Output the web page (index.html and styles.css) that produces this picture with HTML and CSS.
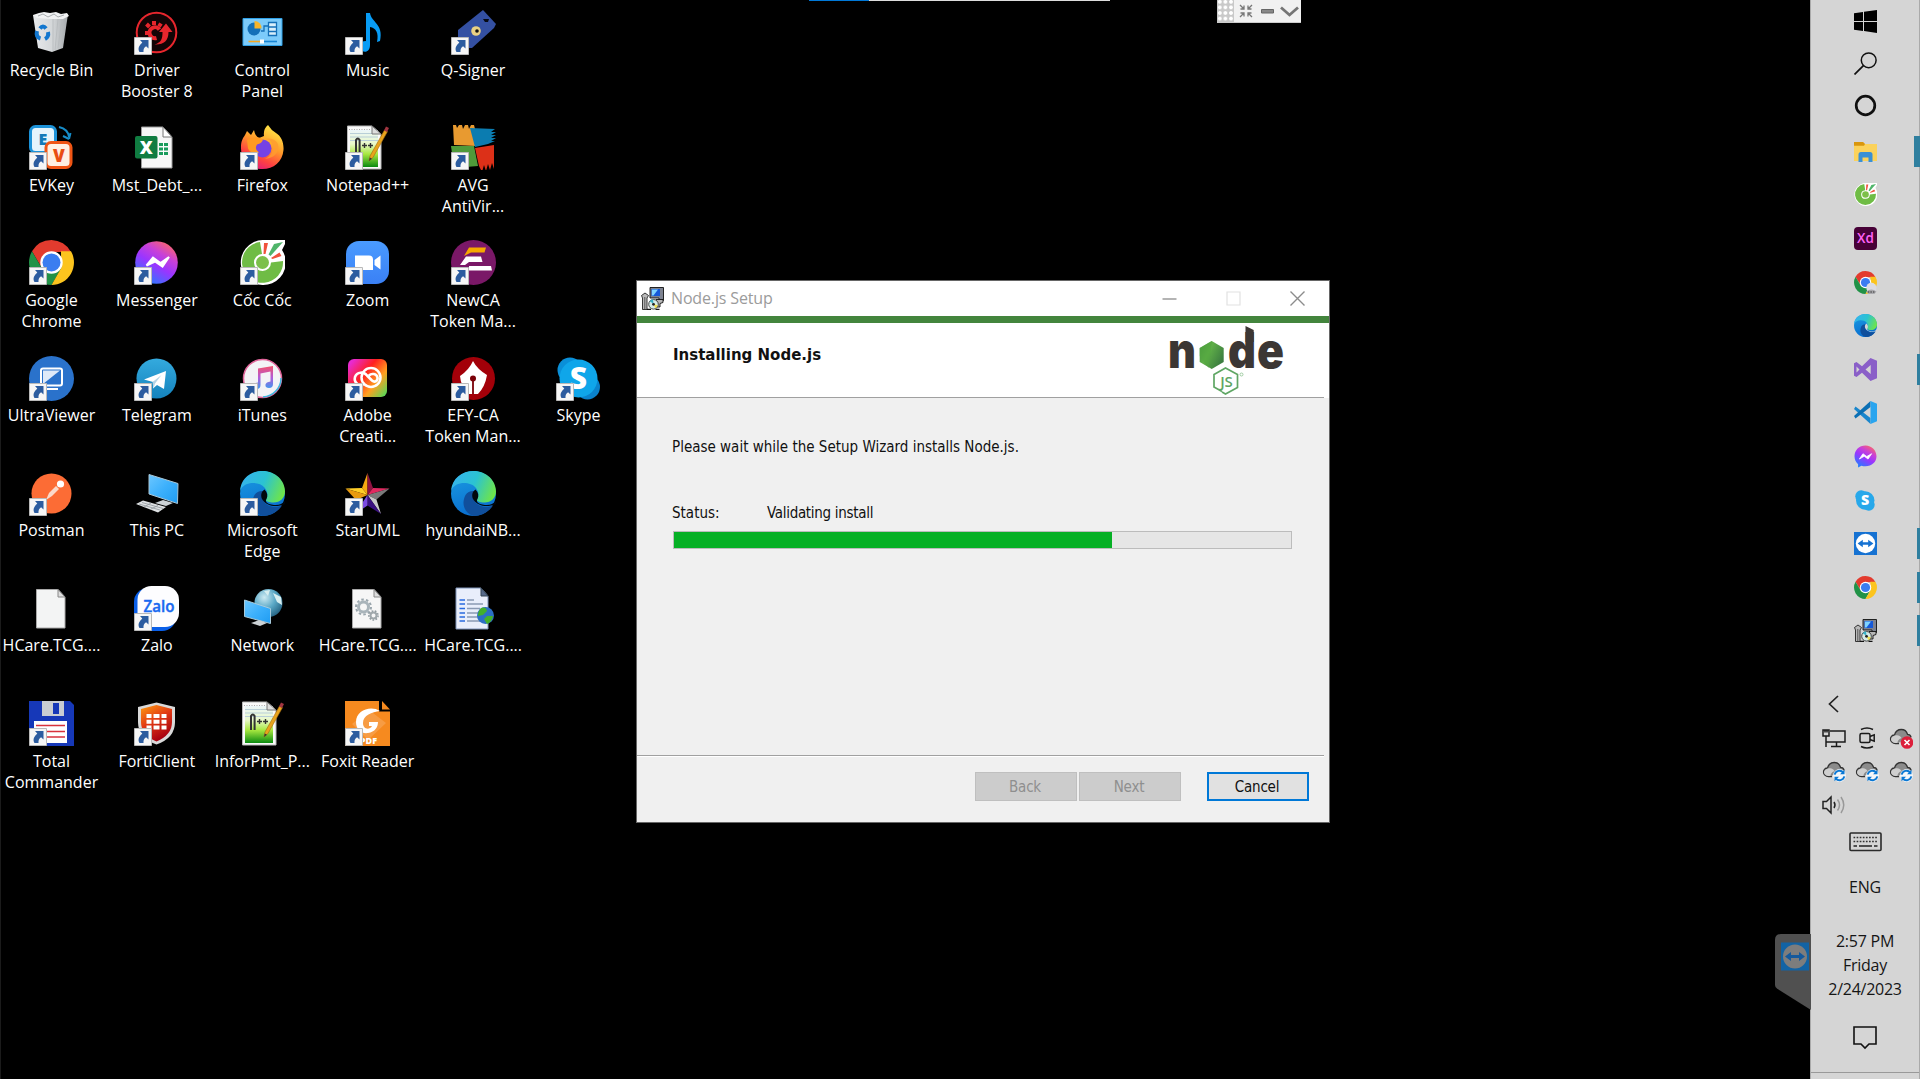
FILE: index.html
```html
<!DOCTYPE html>
<html lang="en">
<head>
<meta charset="utf-8">
<title>Node.js Setup</title>
<link rel="stylesheet" href="styles.css">
</head>
<body>
<svg class="defs" width="0" height="0" aria-hidden="true">
<defs>
<linearGradient id="gMsg" x1="0.2" y1="1" x2="0.8" y2="0"><stop offset="0" stop-color="#1a83ff"/><stop offset=".45" stop-color="#9a35ff"/><stop offset=".7" stop-color="#c840d8"/><stop offset="1" stop-color="#ff6a60"/></linearGradient>
<linearGradient id="gFox" x1="0.8" y1="0" x2="0.3" y2="1"><stop offset="0" stop-color="#fff04a"/><stop offset=".45" stop-color="#ff9a2a"/><stop offset=".75" stop-color="#ff4340"/><stop offset="1" stop-color="#e01880"/></linearGradient>
<linearGradient id="gEdge" x1="0" y1="0.3" x2="1" y2="0.6"><stop offset="0" stop-color="#36b3ee"/><stop offset=".5" stop-color="#2bc3d2"/><stop offset="1" stop-color="#6fe548"/></linearGradient>
<linearGradient id="gEdge2" x1="0" y1="0" x2="0.3" y2="1"><stop offset="0" stop-color="#1b9de2"/><stop offset="1" stop-color="#0a6fd0"/></linearGradient>
<linearGradient id="gBlue" x1="0" y1="0" x2="0" y2="1"><stop offset="0" stop-color="#4a9bff"/><stop offset="1" stop-color="#3a80f5"/></linearGradient>
<linearGradient id="gTg" x1="0" y1="0" x2="0" y2="1"><stop offset="0" stop-color="#34aade"/><stop offset="1" stop-color="#1583bd"/></linearGradient>
<linearGradient id="gNote" x1="0" y1="0" x2="0" y2="1"><stop offset="0" stop-color="#ecf6fa"/><stop offset=".38" stop-color="#e8f8c8"/><stop offset=".65" stop-color="#a8e840"/><stop offset="1" stop-color="#0a8a10"/></linearGradient>
<linearGradient id="gAdobe" x1="0" y1="0.2" x2="1" y2="1"><stop offset="0" stop-color="#e82ad0"/><stop offset=".35" stop-color="#ff2020"/><stop offset=".65" stop-color="#ffa020"/><stop offset="1" stop-color="#40e060"/></linearGradient>
<linearGradient id="gMonitor" x1="0" y1="0" x2="1" y2="1"><stop offset="0" stop-color="#6cc7ff"/><stop offset=".5" stop-color="#3cb0fc"/><stop offset="1" stop-color="#1f9cf2"/></linearGradient>
<linearGradient id="gForti" x1="0" y1="0" x2="0.5" y2="1"><stop offset="0" stop-color="#ff9d10"/><stop offset=".5" stop-color="#e23a14"/><stop offset="1" stop-color="#a80010"/></linearGradient>
<linearGradient id="gTunes" x1="0" y1="0" x2="0" y2="1"><stop offset="0" stop-color="#f2506c"/><stop offset=".5" stop-color="#b25bd8"/><stop offset="1" stop-color="#3a9cf0"/></linearGradient>
<linearGradient id="gBin" x1="0" y1="0" x2="1" y2="0"><stop offset="0" stop-color="#e8eaec"/><stop offset=".55" stop-color="#d4d7d9"/><stop offset="1" stop-color="#a5a9ac"/></linearGradient>
<linearGradient id="gNode" x1="0" y1="0" x2="1" y2="0.6"><stop offset="0" stop-color="#3f8b3d"/><stop offset=".45" stop-color="#5fae48"/><stop offset="1" stop-color="#3c7d40"/></linearGradient>
<radialGradient id="gGlobe" cx=".35" cy=".3" r=".8"><stop offset="0" stop-color="#cdeaf2"/><stop offset=".5" stop-color="#5aa8c6"/><stop offset="1" stop-color="#1e5a7a"/></radialGradient>

<symbol id="shortcut" viewBox="0 0 18 18"><path d="M.5.5h17v17H.5z" fill="#f6f6f6" stroke="#b9b9b9"/><path d="M6 3h8.500v8.500l-2.400-2.200c-2 1.400-2.800 3-2.600 5.700H5.500C3.500 11.500 5 8.500 8.300 5.500z" fill="#2c5c9f"/></symbol>

<symbol id="chrome" viewBox="0 0 45 45"><path d="M22.500 0A22.500 22.500 0 0 0 3 11.300l9.800 16.800L22.500 12H42A22.500 22.500 0 0 0 22.500 0z" fill="#e33b2e"/><path d="M3 11.300A22.500 22.500 0 0 0 22.500 45l9.800-16.900-9.800-5.600-9.700 5.600z" fill="#219247"/><path d="M42 11.300A22.500 22.500 0 0 1 22.500 45l9.700-16.900-.2-16.800z" fill="#fcc41e"/><circle cx="22.500" cy="22.500" r="11.200" fill="#fff"/><circle cx="22.500" cy="22.500" r="9" fill="#3b7df0"/></symbol>

<symbol id="edge" viewBox="0 0 45 45"><circle cx="22.500" cy="22.500" r="22.500" fill="url(#gEdge2)"/><path d="M0 20C1 7 11 0 22.500 0 36 0 45 10 45 20.500c0 6.500-5 11-11.500 11-5 0-8.500-1.500-7.500-3.500 2.500-3.500 1.500-8-1.500-11.500C19.500 10.500 4 9.500 0 20z" fill="url(#gEdge)"/><path d="M14.500 24c-5 10 0 18.500 8 21 8 0 15-4 19.500-10.500-7 3-19 1-20-9-.2-2 .3-4 1.300-5.500-3.500-.5-6.800 1-8.800 4z" fill="#104f9c"/><path class="edge-gap" d="M24.500 18.500c-3.500 2-4.500 7-1.500 11 4 5.500 13 7.500 22 3.500V30c-3 3-6 4.500-11 4-8-.8-9-4-7.500-6 1.500-3 1-6.500-2-9.500z"/></symbol>

<symbol id="messenger" viewBox="0 0 45 45"><path d="M22.500 1C10 1 1 10 1 22c0 6.500 2.500 11.500 7 15.500V44l6.500-3.500c2.500.8 5 1.100 8 1.100C35 41.600 44 33 44 22S35 1 22.500 1z" fill="url(#gMsg)"/><path d="m10.500 27.500 7-10.500 7.500 5.500 9.500-5.500-7 10.500-7.500-5.500z" fill="#fff" stroke="#fff" stroke-width="1.500"/></symbol>

<symbol id="coccoc" viewBox="0 0 45 45"><path d="M22.500 0H45v4l-3 6a22.500 22.500 0 1 1-19.500-10z" fill="#fff"/><path d="M20 2A20.500 20.500 0 1 0 43 21l-12 1.500a8.500 8.500 0 1 1-9-8.500z" fill="#6fbc45"/><circle cx="22.500" cy="22.500" r="6.500" fill="#7cc04a"/><path d="m24 3 4 0-2.500 11h-2zM31 18l8.500-5.500 2 3.500-9 3z" fill="#f0523c"/><path d="M28.500 14.500 34 4l9-2-12.500 14z" fill="#4fb56a"/></symbol>

<symbol id="skype" viewBox="0 0 45 45"><circle cx="14" cy="14" r="12.500" fill="#0a8fd8"/><circle cx="31.500" cy="31" r="12.500" fill="#0a82cc"/><circle cx="22.500" cy="22.500" r="19" fill="#0fa6ea"/><text x="22.500" y="33" text-anchor="middle" class="mark" font-size="30" fill="#fff">S</text></symbol>

<symbol id="notepad" viewBox="0 0 45 45"><path d="M2.500 1H27l9 8v35H2.500z" fill="#fafafa" stroke="#b8b8b8"/><path d="M5 5h28v37H5z" fill="url(#gNote)"/><path d="M4 4.500h22" stroke="#aaa" stroke-dasharray="1 1.500"/><path d="M5 8.500h26M5 12h28M5 15.500h28" stroke="#b9cfd8"/><path d="M27 1v8h9z" fill="#ddd" stroke="#777"/><path d="M11 29V15q1.800-3 3.600 0v14" fill="none" stroke="#333" stroke-width="2"/><path d="M17 20.500h5M19.500 18v5M23 20.500h5M25.500 18v5" stroke="#333" stroke-width="1.400"/><path d="m24 36 1-5 14.500-26 3 1.600L28 32.500z" fill="#e8a31c" stroke="#a06a10" stroke-width=".6"/><path d="m39 5.500 2-4 3 1.600-2 4z" fill="#a03540"/><path d="m24 36 .8-3.500 2.200 1.200z" fill="#333"/></symbol>

<symbol id="teamviewer" viewBox="0 0 23 23"><path d="M0 0h23v23H0z" fill="#1672d2"/><circle cx="11.500" cy="11.500" r="9.700" fill="#fff"/><path d="m3.600 11.500 5.200-3.800v2.600h5.400V7.700l5.200 3.800-5.200 3.800v-2.600H8.800v2.600z" fill="#1672d2"/></symbol>

<symbol id="installer" viewBox="0 0 23 23"><path d="M9 .5h13.500v13H18v-2.500H9z" fill="#7d8290" stroke="#111" stroke-width=".9"/><path d="M10.500 2h8.500v7h-8.500z" fill="#1558d8"/><path d="M11 2.500h6L12.500 8.500H11z" fill="#7fd4ff"/><path d="M15 12.500h7v3l-3 1v3.500h-4z" fill="#b7b7b7" stroke="#111" stroke-width=".9"/><path d="M.5 8.500 4 6l3.500 2.500L6 11v11.500H1.500V11z" fill="#b9b9b9" stroke="#222" stroke-width=".9"/><path d="M3.800 10v12" stroke="#555"/><circle cx="12.500" cy="17.300" r="4.800" fill="#d6ece8" stroke="#333" stroke-width=".9"/><path d="m12.500 17-4-3 3.500-2z" fill="#38b2c8"/><path d="m12.500 17 4.500 1.500-2.500 3z" fill="#f0e04c"/><circle cx="12.500" cy="17.300" r="1.400" fill="#222"/><path d="M6 22.300h4M14.500 22.300h4" stroke="#111" stroke-width="1.200"/></symbol>

<symbol id="cloud" viewBox="0 0 24 22"><path d="M7 16.500c-4 0-6-2.500-5.500-5.200.4-2 2-3.300 4-3.300C6.500 4.500 9 2.500 12.300 2.500c3 0 5.400 2 6.200 4.800 2 .2 3.600 1.600 3.600 3.700" fill="#8b8b8b"/><path d="M10 16.500H6.500C3.500 16.500 1.500 14.300 1.500 12c0-2.300 1.700-4 4-4M5.500 8c1-3.500 3.500-5.500 6.800-5.500 3 0 5.400 2 6.200 4.800 2 .2 3.400 1.500 3.600 3" fill="none" stroke="#333" stroke-width="1.300"/><path d="M6 8.500c3-.8 5 0 6.500 2.500-3 1-4 3-4 5H6c-5-1-5.500-6 0-7.500z" fill="#cfcfcf"/></symbol>
<symbol id="cloudsync" viewBox="0 0 24 22"><use href="#cloud" width="24" height="22"/><circle cx="17.500" cy="15.500" r="6.400" fill="#f4f7fa"/><path d="M12.700 14.600a4.900 4.900 0 0 1 8.600-2M22.300 16.400a4.900 4.900 0 0 1-8.600 2" fill="none" stroke="#0a78d4" stroke-width="1.900"/><path d="M22.500 9.800v4.500H18zM12.500 21.200v-4.500H17z" fill="#0a78d4"/></symbol>
</defs>
</svg>

<main class="desktop">
  <div class="remote-strip"><span class="remote-strip-on"></span></div>

  <div class="remote-bar">
    <span class="grip"></span>
    <svg width="14" height="14" viewBox="0 0 14 14" fill="none" stroke="#777" stroke-width="1.300"><path d="m1 1 4 4M5 1.500V5H1.500M13 1 9 5M9 1.500V5h3.500M1 13l4-4M5 12.500V9H1.500M13 13 9 9M9 12.500V9h3.500"/></svg>
    <svg width="13" height="5" viewBox="0 0 13 5"><path d="M.5.5h12v3.500H.5z" fill="#888" stroke="#666"/></svg>
    <svg width="19" height="11" viewBox="0 0 19 11"><path d="m1 1.500 8.500 7.500L18 1.500" fill="none" stroke="#757575" stroke-width="2.800"/></svg>
  </div>

  <section class="icons">
    <div class="icon first">
      <svg viewBox="0 0 45 45"><path d="m4 5 35-1-5 34-11 4-14-4z" fill="url(#gBin)"/><path d="m4 5 6-2 5-1 6 1 6-1 5 2 6-1 2 3-6 3H22L8 8z" fill="#f1f2f3"/><path d="m9 6 5-2 5 3 6-3 4 3 6-2" fill="none" stroke="#a9adb0"/><path d="m24 9 0 32M33 9l-4 29M29 9l-3 31" stroke="#b6babc" stroke-width=".8"/><path d="M11 18.500q3-4 6 0M19 22q1 5-3 7M11.500 28.500Q6.500 27 8 21" fill="none" stroke="#1377cf" stroke-width="4"/></svg>
      <span>Recycle Bin</span></div>
    <div class="icon">
      <svg viewBox="0 0 45 45"><circle cx="22.500" cy="22.500" r="19.800" fill="#120405" stroke="#e7262d" stroke-width="2"/><path d="M25.500 19.500a5.500 5.500 0 1 0-3 8.500" fill="none" stroke="#e7262d" stroke-width="4"/><path d="m12.500 14 3 3M20 11v4M27 13.500l-2 3M11 23h3M14 30l2.500-2.500" stroke="#e7262d" stroke-width="4"/><path d="M20.500 34.500c7-2 8-6 8-12.500H25l7-8.500 6.500 8.500h-4c0 9-5 13-14 12.500z" fill="#e7262d"/><use href="#shortcut" y="27" width="18" height="18"/></svg>
      <span>Driver<br>Booster 8</span></div>
    <div class="icon">
      <svg viewBox="0 0 45 45"><path d="M3 8.500h39v27H3z" fill="#7ccbfa" stroke="#2fa0e6"/><circle cx="14" cy="19" r="6.500" fill="#1470b8"/><path d="M14.500 18.500V11a7 7 0 0 1 7 7.500z" fill="#f7b52a"/><path d="M21 21h3v-5h4" fill="none" stroke="#1470b8" stroke-width="1.300"/><path d="M28.500 12.500h8v13h-8z" fill="#d9effb" stroke="#1470b8" stroke-width="1.300"/><path d="M28.500 17h8M28.500 21.500h8" stroke="#1470b8" stroke-width="1.500"/><path d="M8.500 31.500h12" stroke="#f4a71e" stroke-width="1.600"/><path d="M21 31.500h16" stroke="#1684d4" stroke-width="1.600"/><path d="M20 29.500h4v4h-4z" fill="#fff"/></svg>
      <span>Control<br>Panel</span></div>
    <div class="icon">
      <svg viewBox="0 0 45 45"><path d="M21 3h4c1 9 14 11 10 28l-3 1c2-9-1-14-7-15v18c0 6-4 8-8 6-5-2-3-10 4-10z" fill="#089cf5"/><use href="#shortcut" y="27" width="18" height="18"/></svg>
      <span>Music</span></div>
    <div class="icon">
      <svg viewBox="0 0 45 45"><path d="M32 0 45 14 43 18 21 38 14 38 7 27 7 20z" fill="#3450a2"/><path d="m32 9 6 0-1 3-3 0z" fill="#070a14"/><circle cx="25" cy="21" r="4.800" fill="#ead183"/><circle cx="26" cy="21" r="1.800" fill="#111"/><use href="#shortcut" y="27" width="18" height="18"/></svg>
      <span>Q-Signer</span></div>

    <div class="icon first">
      <svg viewBox="0 0 45 45"><rect x="1.500" y="1.500" width="25" height="26" rx="5" fill="#e4f4fc" stroke="#1c92d8" stroke-width="3"/><text x="14" y="20" text-anchor="middle" class="mark" font-size="16" fill="#127ab8">E</text><path d="M30 2q9 2 10 10m0 2-6-3m6 3 1.500-6" fill="none" stroke="#168cc8" stroke-width="2"/><rect x="17" y="17.500" width="25" height="25" rx="5" fill="#fff0e2" stroke="#f05514" stroke-width="3"/><text x="30" y="37" text-anchor="middle" class="mark" font-size="17" fill="#e94d12">V</text><use href="#shortcut" y="27" width="18" height="18"/></svg>
      <span>EVKey</span></div>
    <div class="icon">
      <svg viewBox="0 0 45 45"><path d="M7.500 2H29l9 10v31H7.500z" fill="#f7f7f7" stroke="#9a9a9a"/><path d="M29 2v10h9z" fill="#fff" stroke="#777"/><path d="M25 19.500h9M25 24h9M25 28.500h9" stroke="#1a9b5c" stroke-width="2.800"/><path d="M29.500 17v14" stroke="#fff"/><rect x="1" y="11" width="22.500" height="22.500" rx="2" fill="#107c41"/><text x="12.200" y="29" text-anchor="middle" class="mark" font-size="18" fill="#fff">X</text></svg>
      <span>Mst_Debt_...</span></div>
    <div class="icon">
      <svg viewBox="0 0 45 45"><path d="M28 0q3 5 8 8c5 3 8 9 7.500 17-1 12-10 19-21 19-13 0-22-10-21.500-22 0-6 2-9 4-12l2-4 4 4 3-5q1 6 5 8l5-2q-1-7 4-11z" fill="url(#gFox)"/><circle cx="22.500" cy="23.500" r="9" fill="#7542e5"/><path d="M7 15q10-5 16-.5-1 4-6 5-3 5 2 8-8 2-11-4z" fill="#ff9a22"/><path d="M24 14q8 0 9 8 0 8-8 12 15-2 13-15-4-7-14-5z" fill="#ff9c30" opacity=".8"/><use href="#shortcut" y="27" width="18" height="18"/></svg>
      <span>Firefox</span></div>
    <div class="icon">
      <svg viewBox="0 0 45 45"><use href="#notepad" width="45" height="45"/><use href="#shortcut" y="27" width="18" height="18"/></svg>
      <span>Notepad++</span></div>
    <div class="icon">
      <svg viewBox="0 0 45 45"><path d="M2 0h3l1 3 2-3h3l1 4 2-4h3l1 4 2-4h3l1 4 1 17-22-1z" fill="#e89a30"/><path d="m19 3 25 1-4 3h5l-5 3h5l-5 3h5l-5 3h4l-7 3-13 3z" fill="#0b7cb0"/><path d="M0 21h23l4 20-24 2z" fill="#4f9a3a"/><path d="m24 23 19-3v24l-2-6-2 7-2-6-2 7-2-6-2 7-3-6z" fill="#dc3018"/><use href="#shortcut" y="27" width="18" height="18"/></svg>
      <span>AVG<br>AntiVir...</span></div>

    <div class="icon first">
      <svg viewBox="0 0 45 45"><use href="#chrome" width="45" height="45"/><use href="#shortcut" y="27" width="18" height="18"/></svg>
      <span>Google<br>Chrome</span></div>
    <div class="icon">
      <svg viewBox="0 0 45 45"><circle cx="22.500" cy="22.500" r="21.300" fill="url(#gMsg)"/><path d="m12.500 25.500 6.500-8 7.500 5.500 8.500-6-6.500 9.500-7.500-5z" fill="#fff" stroke="#fff" stroke-width="2"/><use href="#shortcut" y="27" width="18" height="18"/></svg>
      <span>Messenger</span></div>
    <div class="icon">
      <svg viewBox="0 0 45 45"><use href="#coccoc" width="45" height="45"/><use href="#shortcut" y="27" width="18" height="18"/></svg>
      <span>Cốc Cốc</span></div>
    <div class="icon">
      <svg viewBox="0 0 45 45"><rect x="1" y="1" width="43" height="43" rx="13" fill="url(#gBlue)"/><path d="M10 15.500h14q4 0 4 4V30H14q-4 0-4-4zM29.500 20l6-4.500v14l-6-4.500z" fill="#fff"/><use href="#shortcut" y="27" width="18" height="18"/></svg>
      <span>Zoom</span></div>
    <div class="icon">
      <svg viewBox="0 0 45 45"><circle cx="22.500" cy="22.500" r="22.500" fill="#7a1867"/><path d="m13 16 5-8.500h17l-1.500 5H20z" fill="#f6a800"/><path d="m9 25 6-8.500h15l1.500 5.500H18l-4 3zM18 26h22l1 4.500H18z" fill="#fff"/><use href="#shortcut" y="27" width="18" height="18"/></svg>
      <span>NewCA<br>Token Ma...</span></div>

    <div class="icon first">
      <svg viewBox="0 0 45 45"><circle cx="22.500" cy="22.500" r="22.500" fill="#2a72cb"/><rect x="12" y="12.500" width="21" height="17" rx="2" fill="#2a72cb" stroke="#fff" stroke-width="2"/><path d="M14 14.500h17L14 28z" fill="#dfeaf8"/><path d="M17 33h12" stroke="#fff" stroke-width="2"/><use href="#shortcut" y="27" width="18" height="18"/></svg>
      <span>UltraViewer</span></div>
    <div class="icon">
      <svg viewBox="0 0 45 45"><circle cx="22.500" cy="22.500" r="20" fill="url(#gTg)"/><path d="m10 23.500 22-8.500-2 18-7-4-4 3.500V26z" fill="#fff"/><path d="m18.500 26 9-7-6.500 8.500-1.500 5z" fill="#b5d4e6"/><use href="#shortcut" y="27" width="18" height="18"/></svg>
      <span>Telegram</span></div>
    <div class="icon">
      <svg viewBox="0 0 45 45"><circle cx="22.500" cy="22.500" r="19" fill="#f3f3f6" stroke="#e0659a" stroke-width="1.500"/><path d="M41 22a19 19 0 0 1-18 19" fill="none" stroke="#3cbbe0" stroke-width="1.500"/><path d="M18 12.500 33 10v18q0 4-4 4t-3.500-3.500q.5-2.500 5-3V15.500L20.500 17.500V29q0 4-4 4t-3.500-3.500q.5-2.500 5-3z" fill="url(#gTunes)"/><use href="#shortcut" y="27" width="18" height="18"/></svg>
      <span>iTunes</span></div>
    <div class="icon">
      <svg viewBox="0 0 45 45"><rect x="3" y="3" width="39" height="38" rx="6" fill="url(#gAdobe)"/><circle cx="26" cy="21.500" r="9.500" fill="none" stroke="#fff" stroke-width="2.500"/><path d="M20 27.500c-6 4-11.500-1-10-6.500 2-5.500 8.500-5.500 12-1.500l5 5c3 2.500 6 0 5.500-3-1-4-6-4.500-8.500-2" fill="none" stroke="#fff" stroke-width="2.600"/><use href="#shortcut" y="27" width="18" height="18"/></svg>
      <span>Adobe<br>Creati...</span></div>
    <div class="icon">
      <svg viewBox="0 0 45 45"><circle cx="22.500" cy="22.500" r="21.500" fill="#a30009"/><path d="M22 5q4 8 14 14-2 12-9 19H17Q10 31 9 20q9-6 13-15z" fill="#fff"/><circle cx="22" cy="22.500" r="3" fill="#7a0008"/><path d="M22 22v16" stroke="#7a0008" stroke-width="1.800"/><use href="#shortcut" y="27" width="18" height="18"/></svg>
      <span>EFY-CA<br>Token Man...</span></div>
    <div class="icon">
      <svg viewBox="0 0 45 45"><use href="#skype" width="45" height="45"/><use href="#shortcut" y="27" width="18" height="18"/></svg>
      <span>Skype</span></div>

    <div class="icon first">
      <svg viewBox="0 0 45 45"><circle cx="22.500" cy="22.500" r="20" fill="#fc6c35"/><path d="m17 29 3-7 7-7 3 3-7 7z" fill="#fbd9c9"/><circle cx="31.500" cy="13" r="3.600" fill="#fff"/><use href="#shortcut" y="27" width="18" height="18"/></svg>
      <span>Postman</span></div>
    <div class="icon">
      <svg viewBox="0 0 45 45"><path d="m15 3.500 29 9-.5 20L15 23z" fill="url(#gMonitor)" stroke="#a9c6d6"/><path d="m21 32 8-3 10 3-7 3z" fill="#cdd3d7"/><path d="m2 33 7-3.500L32 36l-8 5.500z" fill="#dfe2e4"/><path d="m5 33 21 6M8 31.500l21 6M10 36l7-4M17 38l7-3.500" stroke="#8f979c" stroke-width=".8"/></svg>
      <span>This PC</span></div>
    <div class="icon">
      <svg viewBox="0 0 45 45"><use href="#edge" width="45" height="45"/><use href="#shortcut" y="27" width="18" height="18"/></svg>
      <span>Microsoft<br>Edge</span></div>
    <div class="icon">
      <svg viewBox="0 0 45 45"><path d="M22.500 2 17 17l5.500 7z" fill="#f6a810"/><path d="m22.500 24-22-6.500L17 17z" fill="#ffce28"/><path d="m.5 17.500 22 6.500L11 29z" fill="#e89a10"/><path d="m22.500 2 5.500 15-5.500 7z" fill="#8f1240"/><path d="M22.500 24 28 17l16.500.5z" fill="#e02a60"/><path d="m44.500 17.500-22 6.500 9 4.500z" fill="#7a7a7a"/><path d="m22.500 24 9 4.500L36 43z" fill="#c9c9c9"/><path d="M22.500 24v10.500L36 43z" fill="#3a1080"/><path d="M22.500 24v10.500L10 43z" fill="#7a4ae0"/><use href="#shortcut" y="27" width="18" height="18"/></svg>
      <span>StarUML</span></div>
    <div class="icon">
      <svg viewBox="0 0 45 45"><use href="#edge" width="45" height="45"/></svg>
      <span>hyundaiNB...</span></div>

    <div class="icon first">
      <svg viewBox="0 0 45 45"><path d="M7.500 3.500H29l7 7.500v31H7.500z" fill="#f3f4f4" stroke="#a8a8a8"/><path d="M29 3.500V11h7z" fill="#ddd" stroke="#888"/></svg>
      <span>HCare.TCG....</span></div>
    <div class="icon">
      <svg viewBox="0 0 45 45"><rect x="0" y="2" width="42" height="43" rx="14" fill="#0a5fe8"/><rect x="3.500" y="0" width="41.500" height="41" rx="14" fill="#fdfdff"/><text x="25" y="26" text-anchor="middle" class="mark-thin" font-size="15.500" textLength="31" lengthAdjust="spacingAndGlyphs" fill="#1a6af0" stroke="#1a6af0" stroke-width=".4">Zalo</text><use href="#shortcut" y="27" width="18" height="18"/></svg>
      <span>Zalo</span></div>
    <div class="icon">
      <svg viewBox="0 0 45 45"><circle cx="28.500" cy="17" r="14" fill="url(#gGlobe)"/><path d="m24 5 6-1-2 6zM33 7l8 4 1 8-5-3z" fill="#d7eef0"/><path d="m4.500 14 26 8.500v15l-26-7z" fill="url(#gMonitor)" stroke="#a7cbdc"/><path d="m11 37 8-3 8 3-7 3z" fill="#ccd2d6"/></svg>
      <span>Network</span></div>
    <div class="icon">
      <svg viewBox="0 0 45 45"><path d="M7.500 3.500H29l7 7.500v31H7.500z" fill="#f6f6f6" stroke="#a8a8a8"/><path d="M29 3.500V11h7z" fill="#ddd" stroke="#888"/><circle cx="18.500" cy="21" r="5" fill="none" stroke="#a9b4ba" stroke-width="3"/><circle cx="18.500" cy="21" r="7.500" fill="none" stroke="#9aa6ad" stroke-width="2" stroke-dasharray="2.500 2.200"/><circle cx="28.500" cy="29.500" r="3" fill="none" stroke="#a0a8ac" stroke-width="2"/><circle cx="28.500" cy="29.500" r="4.600" fill="none" stroke="#909a9f" stroke-width="1.500" stroke-dasharray="1.700 1.500"/></svg>
      <span>HCare.TCG....</span></div>
    <div class="icon">
      <svg viewBox="0 0 45 45"><path d="M5 2h25l7 8v33H5z" fill="#e9eefb" stroke="#7f93b8"/><path d="M30 2v8h7z" fill="#56698a" stroke="#345"/><path d="M8.500 14H14M8.500 18H14M8.500 22.500H14M8.500 27H14M8.500 31H14M8.500 35H14" stroke="#2a6be0" stroke-width="1.500"/><path d="M16 14h7M16 18h16M16 22.500h13M16 27h11M16 31h11M16 35h13" stroke="#8b9ab4" stroke-width="1.300"/><circle cx="34.500" cy="29.500" r="8.500" fill="#2c6fc4"/><path d="M30 22q5-2 6 3l-4 4-5 1q0-5 3-8zM36 30l6 0q-1 6-6 8l-3-5z" fill="#43b02c"/></svg>
      <span>HCare.TCG....</span></div>

    <div class="icon first">
      <svg viewBox="0 0 45 45"><path d="M0 0h41l4 4v41H3l-3-3z" fill="#1638b8"/><path d="M13 0h22v15H13z" fill="#c9cdd2"/><path d="M24 2h6v11h-6z" fill="#1638b8"/><path d="M5 20h33v22H5z" fill="#fff"/><path d="M7 24.500h29M7 30.500h29M7 36h29" stroke="#d8323c" stroke-width="1.600"/><use href="#shortcut" y="27" width="18" height="18"/></svg>
      <span>Total<br>Commander</span></div>
    <div class="icon">
      <svg viewBox="0 0 45 45"><path d="M22.500 1.500 41 6v15q0 16-18.500 22.500Q4 37 4 21V6z" fill="#d9d9d9"/><path d="M22.500 4 38 8v13q0 13-15.500 19.500Q7 34 7 21V8z" fill="url(#gForti)"/><path d="M12.500 13h5v4h-5zM19.500 13h6v4h-6zM27.500 13h5v4h-5zM12.500 18.800h5v4h-5zM19.500 18.800h6v4h-6zM27.500 18.800h5v4h-5zM12.500 24.600h5v4h-5zM19.500 24.600h6v4h-6zM27.500 24.600h5v4h-5z" fill="#fff"/><use href="#shortcut" y="27" width="18" height="18"/></svg>
      <span>FortiClient</span></div>
    <div class="icon">
      <svg viewBox="0 0 45 45"><use href="#notepad" width="45" height="45"/></svg>
      <span>InforPmt_P...</span></div>
    <div class="icon">
      <svg viewBox="0 0 45 45"><path d="M0 0h34v10.500h11V45H0z" fill="#f68a1f"/><path d="m37 0 8 8.500h-8z" fill="#f68a1f"/><path d="m24 9 17 13-18 17L7 23z" fill="#f9a95c" opacity=".6"/><path d="M35 10c-9-6-24-1-24 11 0 8 6 12 12 11 7-1 10-6 10-11h-9v4h3c-2 4-9 4-9-3 0-8 9-11 17-12z" fill="#fff"/><text x="32" y="42.500" text-anchor="end" class="mark" font-size="9" fill="#fff">PDF</text><use href="#shortcut" y="27" width="18" height="18"/></svg>
      <span>Foxit Reader</span></div>
  </section>

  <section class="dialog">
    <header class="titlebar">
      <svg class="title-icon" viewBox="0 0 23 23"><use href="#installer"/></svg>
      <span class="title">Node.js Setup</span>
      <span class="ctl"><svg width="15" height="15" viewBox="0 0 15 15"><path d="M.5 8h14" stroke="#8c8c8c" stroke-width="1.300"/></svg></span>
      <span class="ctl"><svg width="15" height="15" viewBox="0 0 15 15"><path d="M1 1h13v13H1z" fill="none" stroke="#e2e2e2" stroke-width="1.200"/></svg></span>
      <span class="ctl"><svg width="15" height="15" viewBox="0 0 15 15"><path d="m.5.500 14 14m0-14-14 14" stroke="#8c8c8c" stroke-width="1.400"/></svg></span>
    </header>
    <div class="banner">
      <h1>Installing Node.js</h1>
      <svg class="node-logo" width="114" height="70" viewBox="0 0 114 70">
        <g class="node-word" fill="#3c3734">
          <text x="-2" y="42" textLength="28" lengthAdjust="spacingAndGlyphs">n</text>
          <text x="58" y="42" textLength="28" lengthAdjust="spacingAndGlyphs">d</text>
          <text x="87" y="42" textLength="27" lengthAdjust="spacingAndGlyphs">e</text>
        </g>
        <path d="m75.500 0 8.200 4v12h-8.200z" fill="#3c3734"/>
        <path d="m41.700 15 12 7v14l-12 7-12-7V22z" fill="url(#gNode)"/>
        <path d="m41.700 15-12 7v8l9 12z" fill="#54a83f" opacity=".6"/>
        <path d="M52 65.500 44 61V48.500L55.500 42 67.500 48.500V61.500L55.500 68l-3.500-2" fill="none" stroke="#5fa664" stroke-width="1.700"/>
        <text x="56.500" y="60.500" text-anchor="middle" class="mark-thin" font-size="15" fill="#5fa664">JS</text>
        <circle cx="71.500" cy="48.500" r="1.500" fill="none" stroke="#8cc08e" stroke-width=".8"/>
      </svg>
    </div>
    <div class="body">
      <p class="lead">Please wait while the Setup Wizard installs Node.js.</p>
      <div class="status"><span class="status-label">Status:</span><span class="status-text">Validating install</span></div>
      <div class="progress"><div class="progress-fill" style="width:71%"></div></div>
    </div>
    <footer class="actions">
      <button disabled>Back</button>
      <button disabled>Next</button>
      <button class="primary">Cancel</button>
    </footer>
  </section>

  <div class="tv-tab">
    <svg width="36" height="76" viewBox="0 0 36 76"><path d="M6 0h30v76L2 54.500Q0 53 0 51V6q0-6 6-6z" fill="#505050"/><g transform="translate(6 8.500)"><path d="M0 0h28v28H0z" fill="#1263a4"/><circle cx="14" cy="14" r="12" fill="#7d7d7d"/><path d="m4 14 6-4.500v3h8v-3l6 4.500-6 4.500v-3h-8v3z" fill="#15599c"/></g></svg>
  </div>

  <aside class="taskbar">
    <nav class="system">
      <svg class="task" viewBox="0 0 23 23"><path d="m0 3.200 9-1.300v9H0zM10 1.800 23 0v10.900H10zM0 11.900h9v9L0 19.700zM10 11.900h13V23l-13-1.900z" fill="#000"/></svg>
      <svg class="task" viewBox="0 0 23 23"><circle cx="14.700" cy="8.300" r="7.400" fill="none" stroke="#111" stroke-width="1.500"/><path d="M9.400 13.600.5 22.500" stroke="#111" stroke-width="1.700"/></svg>
      <svg class="task" viewBox="0 0 23 23"><circle cx="11.500" cy="11.500" r="9.300" fill="none" stroke="#101010" stroke-width="2.700"/></svg>
    </nav>
    <nav class="apps">
      <span class="slot open wide"><svg class="task" viewBox="0 0 23 23"><path d="M0 2h9l2 2h12v17H0z" fill="#fbd25b"/><path d="M0 2h9l2 2-1 1.700H0z" fill="#d9960c"/><path d="M4.500 22v-7.500q0-2.500 2.500-2.500h9q2.500 0 2.500 2.500V22h-4v-4.500h-6V22z" fill="#3a90d4"/></svg></span>
      <span class="slot"><svg class="task" viewBox="0 0 45 45"><use href="#coccoc"/></svg></span>
      <span class="slot"><svg class="task" viewBox="0 0 23 23"><rect width="23" height="23" rx="4" fill="#470137"/><text x="11.500" y="16" text-anchor="middle" class="mark-thin" font-size="13.500" fill="#ff61f6">Xd</text></svg></span>
      <span class="slot"><svg class="task" viewBox="0 0 45 45"><use href="#chrome"/><circle cx="34" cy="33" r="10" fill="#dcdce4"/><path d="M24 40q10-8 20 0l-4 5H28z" fill="#a9a9ad"/><path d="M27 41h15" stroke="#333" stroke-width="2" stroke-dasharray="3 2"/></svg></span>
      <span class="slot edge-light"><svg class="task" viewBox="0 0 45 45"><use href="#edge"/></svg></span>
      <span class="slot open"><svg class="task" viewBox="0 0 23 23"><path fill-rule="evenodd" d="M16.500 0 23 2.800v17.400L16.500 23 8 14.700 2.500 19 0 17.700V5.300L2.500 4 8 8.300zM16.700 7l-5.200 4.500 5.200 4.500zM2.500 8.500v6l3-3z" fill="#8a5fc8"/></svg></span>
      <span class="slot"><svg class="task" viewBox="0 0 23 23"><path d="M1.500 5.500 16.500 17v6L0 8z" fill="#1a86cc"/><path d="M1.500 17.500 16.500 6V0L0 15z" fill="#0b6fb4"/><path d="m16.500 0 6.500 2.800v17.400L16.500 23z" fill="#2aa5ef"/></svg></span>
      <span class="slot"><svg class="task" viewBox="0 0 45 45"><use href="#messenger"/></svg></span>
      <span class="slot"><svg class="task" viewBox="0 0 45 45"><g fill="#28a8ea"><circle cx="14" cy="14" r="11.500"/><circle cx="29" cy="31" r="11.500"/><circle cx="22" cy="22.500" r="18"/></g><text x="22" y="32" text-anchor="middle" class="mark" font-size="28" fill="#fff">S</text></svg></span>
      <span class="slot open"><svg class="task" viewBox="0 0 23 23"><use href="#teamviewer"/></svg></span>
      <span class="slot open"><svg class="task" viewBox="0 0 45 45"><use href="#chrome"/></svg></span>
      <span class="slot open"><svg class="task" viewBox="0 0 23 23"><use href="#installer"/></svg></span>
    </nav>
    <div class="tray">
      <svg viewBox="0 0 24 22" fill="none" stroke="#222" stroke-width="1.700"><path d="M16 3 7.500 11l8.500 8"/></svg><i></i><i></i>
      <svg viewBox="0 0 24 22" fill="none" stroke="#1b1b1b" stroke-width="1.500"><path d="M8 4h15v11H4M14.500 15v4.500M9 19.500h10M1 3h6v6H1zM4 9v11M3 3v2.500M5 3v2.500"/></svg>
      <svg viewBox="0 0 24 22" fill="none" stroke="#1b1b1b" stroke-width="1.500"><rect x="5" y="6.500" width="10" height="9" rx="1.500"/><path d="m15 9.500 4.200-1.700v6.400L15 12.500M6 2.500q6-3 12 0M6 19.500q6 3 12 0"/></svg>
      <svg viewBox="0 0 24 22"><use href="#cloud"/><circle cx="18" cy="15.500" r="6.300" fill="#dc1f3a"/><path d="m15.500 13 5 5m0-5-5 5" stroke="#fff" stroke-width="1.600"/></svg>
      <svg viewBox="0 0 24 22"><use href="#cloudsync"/></svg>
      <svg viewBox="0 0 24 22"><use href="#cloudsync"/></svg>
      <svg viewBox="0 0 24 22"><use href="#cloudsync"/></svg>
      <svg viewBox="0 0 24 22" fill="none" stroke="#222" stroke-width="1.500"><path d="M1 7.500h3.500L9 3v16l-4.500-4.500H1zM12 8q2 3 0 6"/><path d="M15.500 5.500q4 5.500 0 11M19 3q5.500 8 0 16" stroke="#999"/></svg>
    </div>
    <svg class="keyboard" viewBox="0 0 33 20"><rect x="1" y="1" width="31" height="17.500" rx="1" fill="none" stroke="#2a2a2a" stroke-width="1.600"/><path d="M4.500 5.500h24M4.500 9.500h24" stroke="#333" stroke-width="1.600" stroke-dasharray="1.700 1.400"/><path d="M4.500 14h3.500M10 14h13M25 14h3.500" stroke="#222" stroke-width="1.600"/></svg>
    <span class="lang">ENG</span>
    <div class="clock"><span>2:57 PM</span><span>Friday</span><span>2/24/2023</span></div>
    <svg class="notes" viewBox="0 0 24 24"><path d="M1 1h22v17h-7l-4 4-4-4H1z" fill="none" stroke="#111" stroke-width="1.600"/></svg>
    <span class="peek"></span>
  </aside>
</main>
</body>
</html>
```
FILE: styles.css
```css
* { box-sizing: border-box; }

body {
  margin: 0;
  background: #fff;
  overflow: hidden;
  font-family: "Open Sans", "Noto Sans", sans-serif;
}

.defs { position: absolute; }

.mark { font-family: "Open Sans", sans-serif; font-weight: 800; letter-spacing: 0; }
.mark-thin { font-family: "Open Sans", sans-serif; font-weight: 600; letter-spacing: 0; }
.edge-gap { fill: #02080d; }
.edge-light .task { --gap: #d5d5d5; }
.edge-gap { fill: var(--gap, #02080d); }

.desktop {
  position: relative;
  display: flex;
  justify-content: space-between;
  width: 1920px;
  height: 1079px;
  background: #000;
  border-left: 1px solid #1b1b1b;
}

/* Desktop icons */
.icons {
  display: grid;
  grid-template-columns: repeat(6, 105.400px);
  grid-auto-rows: 115.200px;
  margin-left: -2.200px;
  padding-top: 10px;
  height: 830px;
}
.icon {
  display: flex;
  flex-direction: column;
  align-items: center;
  gap: 4.500px;
  color: #fff;
  font-size: 16px;
  line-height: 21px;
  letter-spacing: 0;
  text-align: center;
}
.icon.first { grid-column: 1; }
.icon svg { width: 45px; height: 45px; flex: none; }
.icon span { white-space: nowrap; }

/* Remote session controls */
.remote-strip {
  position: absolute;
  left: 808px;
  top: 0;
  width: 301px;
  height: 1px;
  background: #ddd;
}
.remote-strip-on { display: block; width: 60px; height: 1px; background: #0078d7; }
.remote-bar {
  position: absolute;
  left: 1216px;
  top: 0;
  display: flex;
  align-items: center;
  width: 84px;
  height: 23px;
  background: #f1f1f1;
  border-bottom: 1px solid #ccc;
}
.grip {
  width: 17px;
  height: 22px;
  margin-right: 5px;
  background: radial-gradient(circle, #fff 1.700px, #c9c9c9 2.100px) 0 -1px / 5.600px 5.600px;
}
.remote-bar svg + svg { margin-left: 8px; }
.remote-bar svg:last-child { margin-left: 6px; }

/* Installer window */
.dialog {
  position: absolute;
  left: 635px;
  top: 280px;
  display: flex;
  flex-direction: column;
  width: 694px;
  height: 543px;
  background: #f0f0f0;
  border: 1px solid #666;
  font-family: "DejaVu Sans Condensed", "DejaVu Sans", sans-serif;
  font-size: 15px;
  color: #111;
}
.titlebar {
  display: flex;
  align-items: center;
  height: 35px;
  padding: 0 0 1px 4px;
  background: #fff;
}
.title-icon { width: 23px; height: 23px; }
.title {
  flex: 1;
  margin-left: 7px;
  font-family: "Open Sans", sans-serif;
  font-size: 16px;
  line-height: 22px;
  padding-bottom: 1px;
  letter-spacing: -0.150px;
  color: #9b9b9b;
}
.ctl { display: flex; justify-content: center; width: 64px; }
.banner {
  display: flex;
  justify-content: space-between;
  height: 82px;
  padding: 3px 45px 0 36px;
  background: #fff;
  border-top: 7px solid #43853d;
  position: relative;
}
.banner::after {
  content: "";
  position: absolute;
  left: 0;
  right: 5px;
  bottom: 0;
  height: 1px;
  background: #a0a0a0;
}
.banner h1 {
  margin: 18px 0 0;
  font-family: "DejaVu Sans", sans-serif;
  font-size: 15px;
  line-height: 22px;
  font-weight: bold;
}
.node-logo { overflow: visible; }
.node-word { font-family: Inter, sans-serif; font-weight: 900; font-size: 49px; }
.body { flex: 1; padding: 38px 37px 0 35px; }
.lead { margin: 0; line-height: 22px; }
.status { display: flex; margin-top: 44px; line-height: 22px; }
.status-label { width: 95px; }
.status-text { letter-spacing: -0.300px; }
.progress {
  height: 18px;
  margin: 7px 0 0 1px;
  background: #e6e6e6;
  border: 1px solid #bcbcbc;
}
.progress-fill { height: 100%; background: #06b025; }
.actions {
  position: relative;
  display: flex;
  justify-content: flex-end;
  height: 67px;
  padding: 17px 20px 0 0;
}
.actions::before {
  content: "";
  position: absolute;
  left: 0;
  right: 5px;
  top: 0;
  height: 2px;
  background: linear-gradient(#a0a0a0 50%, #fff 50%);
}
.actions button {
  width: 102px;
  height: 29px;
  margin-left: 2px;
  padding: 0 2px 0 0;
  background: #ccc;
  border: 1px solid #bfbfbf;
  font: inherit;
  letter-spacing: -0.200px;
  color: #8f8f8f;
}
.actions .primary {
  margin-left: 26px;
  background: #e1e1e1;
  border: 2px solid #0078d7;
  color: #111;
}

.tv-tab { position: absolute; left: 1774px; top: 934px; line-height: 0; }

/* Vertical taskbar */
.taskbar {
  display: flex;
  flex-direction: column;
  align-items: center;
  width: 110px;
  background: #d5d5d5;
  border-left: 1px solid #aaa;
  border-right: 1px solid #aaa;
  color: #151515;
  font-size: 16px;
}
.task { width: 23px; height: 23px; }
.system { display: grid; grid-auto-rows: 42px; place-items: center; }
.apps { display: grid; grid-auto-rows: 43.600px; width: 100%; margin-top: 3.500px; }
.slot {
  display: flex;
  align-items: center;
  justify-content: center;
  height: 31px;
  align-self: center;
}
.slot.open { border-right: 3px solid #2f7f9f; padding-left: 2px; margin-right: -1px; }
.slot.wide { border-right-width: 6px; padding-left: 5px; border-image: linear-gradient(90deg, #86b3c6 50%, #2f7f9f 50%) 1 / 0 6px 0 0; }
.tray {
  display: grid;
  grid-template-columns: repeat(3, 33.500px);
  grid-auto-rows: 33.600px;
  place-items: center;
  margin: 34.500px 0 0 4px;
}
.tray svg { width: 24px; height: 22px; }
.keyboard { width: 33px; height: 20px; margin-top: 10px; }
.lang { margin-top: 24px; line-height: 22px; letter-spacing: -0.200px; }
.clock {
  display: flex;
  flex-direction: column;
  align-items: center;
  margin-top: 31px;
  line-height: 24.200px;
  letter-spacing: -0.250px;
}
.notes { width: 24px; height: 24px; margin-top: 25px; }
.peek { width: 100%; height: 7px; margin-top: auto; border-top: 1px solid #999; }
```
